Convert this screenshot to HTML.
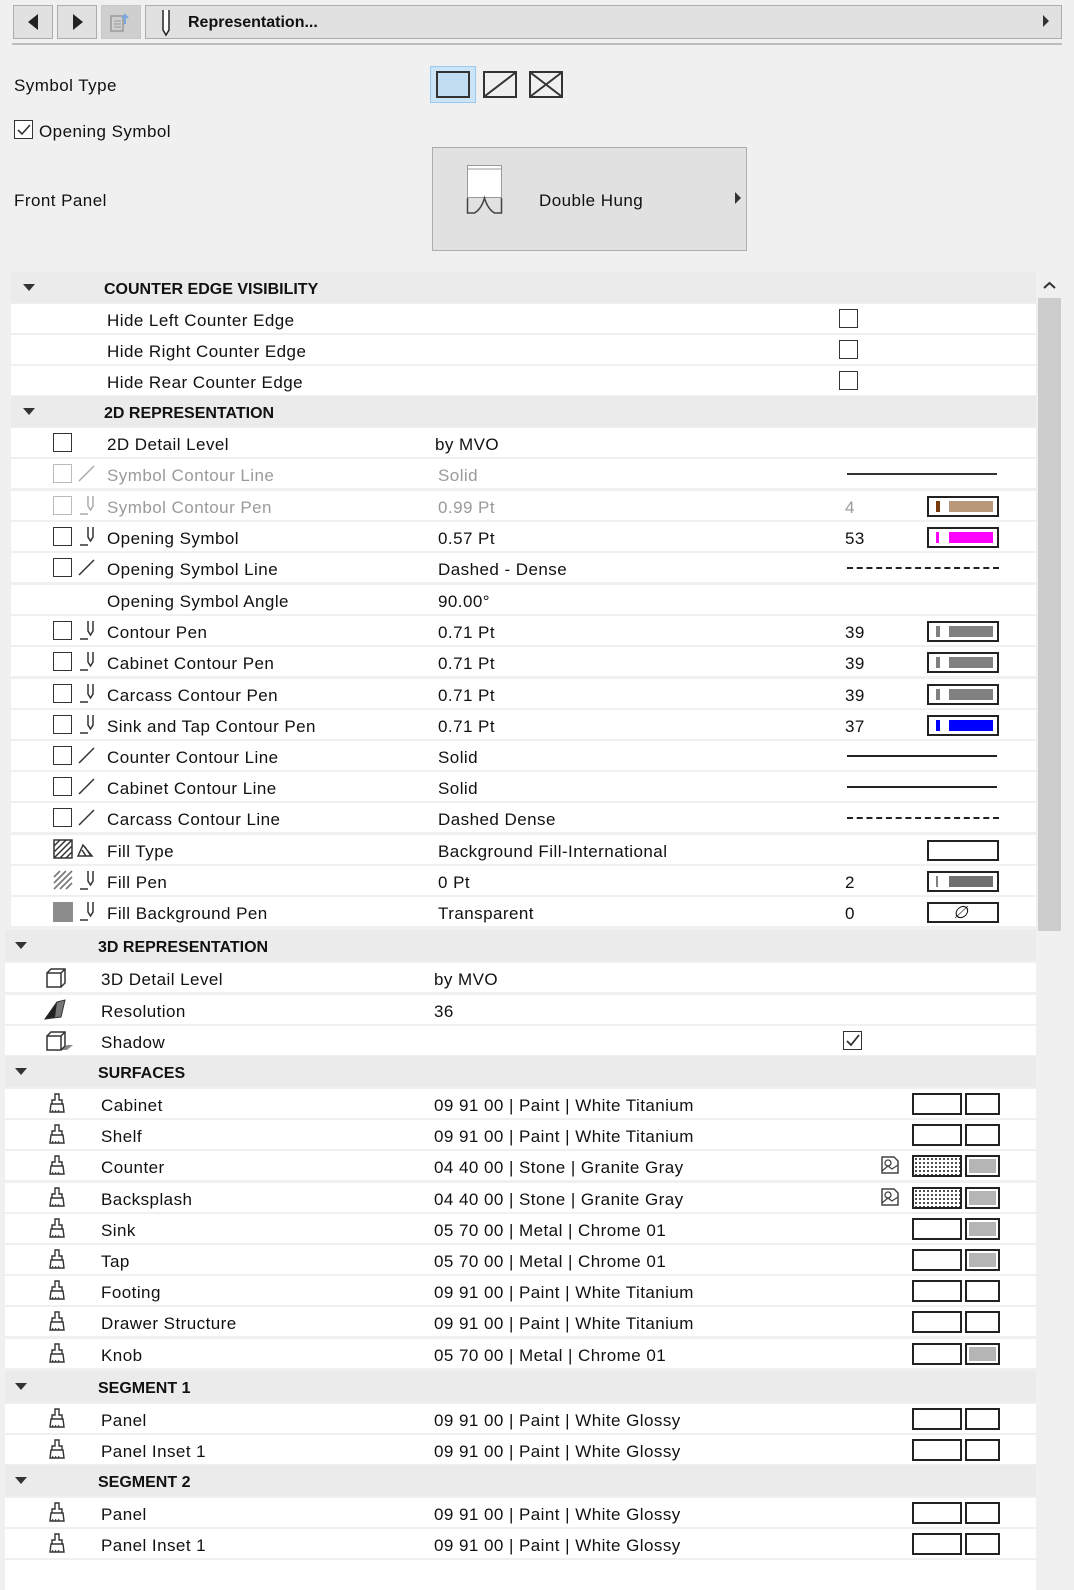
<!DOCTYPE html>
<html><head><meta charset="utf-8">
<style>
*{margin:0;padding:0;box-sizing:border-box}
body{width:1074px;height:1579px;background:#f0f0f0;font-family:"Liberation Sans",sans-serif;font-size:17px;letter-spacing:0.45px;color:#111;position:relative;overflow:hidden}
.a{position:absolute}
.r{position:absolute;left:11px;width:1025px;height:29px;background:#fff}
.r3{left:5px;width:1031px}
.h{position:absolute;left:11px;width:1025px;height:31px;background:#ebebeb;font-weight:bold;font-size:16px;letter-spacing:0}
.h3{left:5px;width:1031px}
.t{position:absolute;top:2px;line-height:29px;white-space:nowrap}
.h .t{line-height:31px}
.g{color:#9a9a9a}
.cb{position:absolute;top:5px;width:19px;height:19px;border:1.5px solid #333;background:#fff}
.g .cb{border-color:#bbb}
.ic{position:absolute;top:4px}
.tri{position:absolute;left:12px;top:12px;width:0;height:0;border-left:6px solid transparent;border-right:6px solid transparent;border-top:7px solid #333}
.sw{position:absolute;left:916px;top:5px;width:72px;height:21px;border:2px solid #222;background:#fff}
.sw .b{position:absolute;left:7px;top:3px;width:4px;height:11px}
.sw .f{position:absolute;left:20px;top:3px;width:44px;height:11px}
.ln{position:absolute;left:836px;top:14px;width:150px;border-top:2px solid #222}
.dl{position:absolute;left:836px;top:14px;width:152px;border-top:2px dashed #222}
.s1{position:absolute;left:907px;top:4px;width:50px;height:22px;border:2px solid #222;background:#fff}
.s2{position:absolute;left:960px;top:4px;width:35px;height:22px;border:2px solid #222;background:#fff}
.s2.gr{background:#b5b5b5;box-shadow:inset 0 0 0 2px #fff}
.dot{background-color:#fff;background-image:radial-gradient(#222 0.9px,transparent 1.1px);background-size:4px 4px}
.v{left:427px}
.v3{left:429px}
.n{left:834px}
.L{left:96px}
#list{position:absolute;left:0;top:2px;width:1074px;height:1577px}
</style></head><body>
<div class="a" style="left:12px;top:5px;width:1050px;height:34px;background:#f0f0f0"></div>
<div class="a" style="left:13px;top:5px;width:40px;height:34px;background:#e1e1e1;border:1px solid #adadad"></div>
<div class="a" style="left:28px;top:14px;border-top:8px solid transparent;border-bottom:8px solid transparent;border-right:10px solid #222"></div>
<div class="a" style="left:57px;top:5px;width:40px;height:34px;background:#e1e1e1;border:1px solid #adadad"></div>
<div class="a" style="left:73px;top:14px;border-top:8px solid transparent;border-bottom:8px solid transparent;border-left:10px solid #222"></div>
<div class="a" style="left:101px;top:5px;width:40px;height:34px;background:#cfcfcf;border:1px solid #c8c8c8"></div>
<svg class="a" style="left:108px;top:10px" width="28" height="26"><rect x="3" y="6" width="12" height="15" fill="none" stroke="#9a9a9a" stroke-width="1.5"/><path d="M6 11h7M6 14h7M6 17h7" stroke="#9a9a9a"/><path d="M17 14V5M14 8l3-3 3 3" stroke="#7aa7e0" stroke-width="2" fill="none"/></svg>
<div class="a" style="left:145px;top:5px;width:917px;height:34px;background:#e1e1e1;border:1px solid #adadad"></div>
<svg class="a" style="left:157px;top:8px" width="20" height="30"><path d="M6 2v20l3 5 3-5V2" fill="#fff" stroke="#222" stroke-width="1.5"/></svg>
<div class="a" style="left:188px;top:14px;font-weight:bold;font-size:16px;letter-spacing:0">Representation...</div>
<div class="a" style="left:1043px;top:15px;border-top:6px solid transparent;border-bottom:6px solid transparent;border-left:6px solid #333"></div>
<div class="a" style="left:12px;top:43px;width:1050px;height:2px;background:#bdbdbd"></div>

<div class="a" style="left:14px;top:76px">Symbol Type</div>
<div class="a" style="left:430px;top:66px;width:46px;height:37px;background:#cce4f7;border:1px solid #99c9ef"></div>
<div class="a" style="left:436px;top:71px;width:34px;height:27px;background:#c2dcf2;border:2px solid #333"></div>
<div class="a" style="left:483px;top:71px;width:34px;height:27px;border:2px solid #333"></div>
<svg class="a" style="left:483px;top:71px" width="34" height="27"><path d="M2 25L32 2" stroke="#333" stroke-width="2"/></svg>
<div class="a" style="left:529px;top:71px;width:34px;height:27px;border:2px solid #333"></div>
<svg class="a" style="left:529px;top:71px" width="34" height="27"><path d="M2 2L32 25M2 25L32 2" stroke="#333" stroke-width="2"/></svg>
<div class="a" style="left:14px;top:120px;width:19px;height:19px;border:1.5px solid #333;background:#fff"></div>
<svg class="a" style="left:14px;top:120px" width="19" height="19"><path d="M4 10l4 4 8-9" stroke="#333" stroke-width="1.6" fill="none"/></svg>
<div class="a" style="left:39px;top:122px">Opening Symbol</div>
<div class="a" style="left:14px;top:191px">Front Panel</div>
<div class="a" style="left:432px;top:147px;width:315px;height:104px;background:#e1e1e1;border:1px solid #adadad"></div>
<svg class="a" style="left:466px;top:164px" width="40" height="52"><rect x="1.5" y="1.5" width="34" height="32" fill="#fff" stroke="#999"/><path d="M1.5 5h34" stroke="#999"/><path d="M1.5 34v15h7c5-3 8-8 10-15 2 7 5 12 10 15h7V34" fill="none" stroke="#444" stroke-width="1.5"/></svg>
<div class="a" style="left:539px;top:191px">Double Hung</div>
<div class="a" style="left:735px;top:192px;border-top:6px solid transparent;border-bottom:6px solid transparent;border-left:6px solid #333"></div>

<div class="a" style="left:1038px;top:270px;width:23px;height:1309px;background:#f0f0f0"></div>
<svg class="a" style="left:1038px;top:277px" width="23" height="16"><path d="M6 11l5.5-5 5.5 5" stroke="#333" stroke-width="2" fill="none"/></svg>
<div class="a" style="left:1038px;top:298px;width:23px;height:633px;background:#cdcdcd"></div>

<div id="list">
<div class="h" style="top:270px"><div class="tri"></div><div class="t" style="left:93px">COUNTER EDGE VISIBILITY</div></div>
<div class="r" style="top:302px"><div class="t L">Hide Left Counter Edge</div><div class="cb" style="left:828px"></div></div>
<div class="r" style="top:333px"><div class="t L">Hide Right Counter Edge</div><div class="cb" style="left:828px"></div></div>
<div class="r" style="top:364px"><div class="t L">Hide Rear Counter Edge</div><div class="cb" style="left:828px"></div></div>

<div class="h" style="top:394px"><div class="tri"></div><div class="t" style="left:93px">2D REPRESENTATION</div></div>
<div class="r" style="top:426px"><div class="cb" style="left:42px"></div><div class="t L">2D Detail Level</div><div class="t" style="left:424px">by MVO</div></div>
<div class="r g" style="top:457px"><div class="cb" style="left:42px"></div><svg class="ic" style="left:66px" width="20" height="20"><path d="M2 18L17 3" stroke="#aaa" stroke-width="1.5"/></svg><div class="t L">Symbol Contour Line</div><div class="t v">Solid</div><div class="ln" style="border-color:#333"></div></div>
<div class="r g" style="top:489px"><div class="cb" style="left:42px"></div><svg class="ic" style="left:66px" width="20" height="22"><path d="M11 1v10l2.5 4 2.5-4V1M3 19h8" fill="none" stroke="#aaa" stroke-width="1.5"/></svg><div class="t L">Symbol Contour Pen</div><div class="t v">0.99 Pt</div><div class="t n">4</div><div class="sw"><div class="b" style="background:#7a3b0c"></div><div class="f" style="background:#b8977a"></div></div></div>
<div class="r" style="top:520px"><div class="cb" style="left:42px"></div><svg class="ic" style="left:66px" width="20" height="22"><path d="M11 1v10l2.5 4 2.5-4V1M3 19h8" fill="none" stroke="#333" stroke-width="1.5"/></svg><div class="t L">Opening Symbol</div><div class="t v">0.57 Pt</div><div class="t n">53</div><div class="sw"><div class="b" style="background:#f0f;width:3px"></div><div class="f" style="background:#f0f"></div></div></div>
<div class="r" style="top:551px"><div class="cb" style="left:42px"></div><svg class="ic" style="left:66px" width="20" height="20"><path d="M2 18L17 3" stroke="#333" stroke-width="1.5"/></svg><div class="t L">Opening Symbol Line</div><div class="t v">Dashed - Dense</div><div class="dl"></div></div>
<div class="r" style="top:583px"><div class="t L">Opening Symbol Angle</div><div class="t v">90.00°</div></div>
<div class="r" style="top:614px"><div class="cb" style="left:42px"></div><svg class="ic" style="left:66px" width="20" height="22"><path d="M11 1v10l2.5 4 2.5-4V1M3 19h8" fill="none" stroke="#333" stroke-width="1.5"/></svg><div class="t L">Contour Pen</div><div class="t v">0.71 Pt</div><div class="t n">39</div><div class="sw"><div class="b" style="background:#808080"></div><div class="f" style="background:#808080"></div></div></div>
<div class="r" style="top:645px"><div class="cb" style="left:42px"></div><svg class="ic" style="left:66px" width="20" height="22"><path d="M11 1v10l2.5 4 2.5-4V1M3 19h8" fill="none" stroke="#333" stroke-width="1.5"/></svg><div class="t L">Cabinet Contour Pen</div><div class="t v">0.71 Pt</div><div class="t n">39</div><div class="sw"><div class="b" style="background:#808080"></div><div class="f" style="background:#808080"></div></div></div>
<div class="r" style="top:677px"><div class="cb" style="left:42px"></div><svg class="ic" style="left:66px" width="20" height="22"><path d="M11 1v10l2.5 4 2.5-4V1M3 19h8" fill="none" stroke="#333" stroke-width="1.5"/></svg><div class="t L">Carcass Contour Pen</div><div class="t v">0.71 Pt</div><div class="t n">39</div><div class="sw"><div class="b" style="background:#808080"></div><div class="f" style="background:#808080"></div></div></div>
<div class="r" style="top:708px"><div class="cb" style="left:42px"></div><svg class="ic" style="left:66px" width="20" height="22"><path d="M11 1v10l2.5 4 2.5-4V1M3 19h8" fill="none" stroke="#333" stroke-width="1.5"/></svg><div class="t L">Sink and Tap Contour Pen</div><div class="t v">0.71 Pt</div><div class="t n">37</div><div class="sw"><div class="b" style="background:#00f"></div><div class="f" style="background:#00f"></div></div></div>
<div class="r" style="top:739px"><div class="cb" style="left:42px"></div><svg class="ic" style="left:66px" width="20" height="20"><path d="M2 18L17 3" stroke="#333" stroke-width="1.5"/></svg><div class="t L">Counter Contour Line</div><div class="t v">Solid</div><div class="ln"></div></div>
<div class="r" style="top:770px"><div class="cb" style="left:42px"></div><svg class="ic" style="left:66px" width="20" height="20"><path d="M2 18L17 3" stroke="#333" stroke-width="1.5"/></svg><div class="t L">Cabinet Contour Line</div><div class="t v">Solid</div><div class="ln"></div></div>
<div class="r" style="top:801px"><div class="cb" style="left:42px"></div><svg class="ic" style="left:66px" width="20" height="20"><path d="M2 18L17 3" stroke="#333" stroke-width="1.5"/></svg><div class="t L">Carcass Contour Line</div><div class="t v">Dashed Dense</div><div class="dl"></div></div>
<div class="r" style="top:833px"><svg class="ic" style="left:42px" width="42" height="22"><rect x="1" y="1" width="18" height="18" fill="#fff" stroke="#333" stroke-width="1.5"/><path d="M1 7L7 1M1 13L13 1M1 19L19 1M7 19L19 7M13 19L19 13" stroke="#333" stroke-width="1.5"/><path d="M25 17l5-11 9 11zM29 11l4 6M32 8l6 9" fill="none" stroke="#333" stroke-width="1.5"/></svg><div class="t L">Fill Type</div><div class="t v">Background Fill-International</div><div class="sw"></div></div>
<div class="r" style="top:864px"><svg class="ic" style="left:42px" width="20" height="22"><path d="M1 7L7 1M1 13L13 1M1 19L19 1M7 19L19 7M13 19L19 13" stroke="#777" stroke-width="1.6"/></svg><svg class="ic" style="left:66px" width="20" height="22"><path d="M11 1v10l2.5 4 2.5-4V1M3 19h8" fill="none" stroke="#333" stroke-width="1.5"/></svg><div class="t L">Fill Pen</div><div class="t v">0 Pt</div><div class="t n">2</div><div class="sw"><div class="b" style="background:#808080;width:2px"></div><div class="f" style="background:#707070"></div></div></div>
<div class="r" style="top:895px"><div class="a" style="left:42px;top:5px;width:20px;height:20px;background:#8c8c8c"></div><svg class="ic" style="left:66px" width="20" height="22"><path d="M11 1v10l2.5 4 2.5-4V1M3 19h8" fill="none" stroke="#333" stroke-width="1.5"/></svg><div class="t L">Fill Background Pen</div><div class="t v">Transparent</div><div class="t n">0</div><div class="sw"><div class="t" style="left:24px;top:-6px;font-style:italic">∅</div></div></div>

<div class="h h3" style="top:928px"><div class="tri" style="left:10px"></div><div class="t" style="left:93px">3D REPRESENTATION</div></div>
<div class="r r3" style="top:961px"><svg class="ic" style="left:40px" width="24" height="22"><path d="M2 6h14v14H2zM2 6l4-4h14v14l-4 4M16 6l4-4" fill="none" stroke="#333" stroke-width="1.5"/></svg><div class="t L">3D Detail Level</div><div class="t v3">by MVO</div></div>
<div class="r r3" style="top:993px"><svg class="ic" style="left:38px" width="26" height="22"><path d="M2 20L14 3 22 1 18 18z" fill="#777" stroke="#333"/><path d="M2 20L14 3 12 18z" fill="#222"/></svg><div class="t L">Resolution</div><div class="t v3">36</div></div>
<div class="r r3" style="top:1024px"><svg class="ic" style="left:40px" width="30" height="22"><path d="M16 20l6-5h6l-6 5z" fill="#888"/><path d="M2 6h14v14H2zM2 6l4-4h14v14l-4 4M16 6l4-4" fill="#fff" stroke="#333" stroke-width="1.5"/></svg><div class="t L">Shadow</div><div class="cb" style="left:838px"></div><svg class="a" style="left:838px;top:5px" width="19" height="19"><path d="M4 10l4 4 8-10" stroke="#333" stroke-width="1.8" fill="none"/></svg></div>

<div class="h h3" style="top:1054px"><div class="tri" style="left:10px"></div><div class="t" style="left:93px">SURFACES</div></div>
<div class="r r3" style="top:1087px"><svg class="ic" style="left:42px" width="20" height="22"><path d="M8 1h4v6h3v4h-10v-4h3zM4 11h12l1 8H3z" fill="none" stroke="#333" stroke-width="1.4"/><path d="M5 19l1-2M8 19l1-2M11 19l1-2" stroke="#333"/></svg><div class="t L">Cabinet</div><div class="t v3">09 91 00 | Paint | White Titanium</div><div class="s1"></div><div class="s2"></div></div>
<div class="r r3" style="top:1118px"><svg class="ic" style="left:42px" width="20" height="22"><path d="M8 1h4v6h3v4h-10v-4h3zM4 11h12l1 8H3z" fill="none" stroke="#333" stroke-width="1.4"/><path d="M5 19l1-2M8 19l1-2M11 19l1-2" stroke="#333"/></svg><div class="t L">Shelf</div><div class="t v3">09 91 00 | Paint | White Titanium</div><div class="s1"></div><div class="s2"></div></div>
<div class="r r3" style="top:1149px"><svg class="ic" style="left:42px" width="20" height="22"><path d="M8 1h4v6h3v4h-10v-4h3zM4 11h12l1 8H3z" fill="none" stroke="#333" stroke-width="1.4"/><path d="M5 19l1-2M8 19l1-2M11 19l1-2" stroke="#333"/></svg><div class="t L">Counter</div><div class="t v3">04 40 00 | Stone | Granite Gray</div><svg class="ic" style="left:875px" width="20" height="20"><path d="M2 2h12l4 4v12H2z" fill="none" stroke="#444" stroke-width="1.5"/><circle cx="8" cy="8" r="3" fill="none" stroke="#444" stroke-width="1.3"/><path d="M2 16l6-5 4 3 6-4" fill="none" stroke="#444" stroke-width="1.3"/></svg><div class="s1 dot"></div><div class="s2 gr"></div></div>
<div class="r r3" style="top:1181px"><svg class="ic" style="left:42px" width="20" height="22"><path d="M8 1h4v6h3v4h-10v-4h3zM4 11h12l1 8H3z" fill="none" stroke="#333" stroke-width="1.4"/><path d="M5 19l1-2M8 19l1-2M11 19l1-2" stroke="#333"/></svg><div class="t L">Backsplash</div><div class="t v3">04 40 00 | Stone | Granite Gray</div><svg class="ic" style="left:875px" width="20" height="20"><path d="M2 2h12l4 4v12H2z" fill="none" stroke="#444" stroke-width="1.5"/><circle cx="8" cy="8" r="3" fill="none" stroke="#444" stroke-width="1.3"/><path d="M2 16l6-5 4 3 6-4" fill="none" stroke="#444" stroke-width="1.3"/></svg><div class="s1 dot"></div><div class="s2 gr"></div></div>
<div class="r r3" style="top:1212px"><svg class="ic" style="left:42px" width="20" height="22"><path d="M8 1h4v6h3v4h-10v-4h3zM4 11h12l1 8H3z" fill="none" stroke="#333" stroke-width="1.4"/><path d="M5 19l1-2M8 19l1-2M11 19l1-2" stroke="#333"/></svg><div class="t L">Sink</div><div class="t v3">05 70 00 | Metal | Chrome 01</div><div class="s1"></div><div class="s2 gr"></div></div>
<div class="r r3" style="top:1243px"><svg class="ic" style="left:42px" width="20" height="22"><path d="M8 1h4v6h3v4h-10v-4h3zM4 11h12l1 8H3z" fill="none" stroke="#333" stroke-width="1.4"/><path d="M5 19l1-2M8 19l1-2M11 19l1-2" stroke="#333"/></svg><div class="t L">Tap</div><div class="t v3">05 70 00 | Metal | Chrome 01</div><div class="s1"></div><div class="s2 gr"></div></div>
<div class="r r3" style="top:1274px"><svg class="ic" style="left:42px" width="20" height="22"><path d="M8 1h4v6h3v4h-10v-4h3zM4 11h12l1 8H3z" fill="none" stroke="#333" stroke-width="1.4"/><path d="M5 19l1-2M8 19l1-2M11 19l1-2" stroke="#333"/></svg><div class="t L">Footing</div><div class="t v3">09 91 00 | Paint | White Titanium</div><div class="s1"></div><div class="s2"></div></div>
<div class="r r3" style="top:1305px"><svg class="ic" style="left:42px" width="20" height="22"><path d="M8 1h4v6h3v4h-10v-4h3zM4 11h12l1 8H3z" fill="none" stroke="#333" stroke-width="1.4"/><path d="M5 19l1-2M8 19l1-2M11 19l1-2" stroke="#333"/></svg><div class="t L">Drawer Structure</div><div class="t v3">09 91 00 | Paint | White Titanium</div><div class="s1"></div><div class="s2"></div></div>
<div class="r r3" style="top:1337px"><svg class="ic" style="left:42px" width="20" height="22"><path d="M8 1h4v6h3v4h-10v-4h3zM4 11h12l1 8H3z" fill="none" stroke="#333" stroke-width="1.4"/><path d="M5 19l1-2M8 19l1-2M11 19l1-2" stroke="#333"/></svg><div class="t L">Knob</div><div class="t v3">05 70 00 | Metal | Chrome 01</div><div class="s1"></div><div class="s2 gr"></div></div>

<div class="h h3" style="top:1369px"><div class="tri" style="left:10px"></div><div class="t" style="left:93px">SEGMENT 1</div></div>
<div class="r r3" style="top:1402px"><svg class="ic" style="left:42px" width="20" height="22"><path d="M8 1h4v6h3v4h-10v-4h3zM4 11h12l1 8H3z" fill="none" stroke="#333" stroke-width="1.4"/><path d="M5 19l1-2M8 19l1-2M11 19l1-2" stroke="#333"/></svg><div class="t L">Panel</div><div class="t v3">09 91 00 | Paint | White Glossy</div><div class="s1"></div><div class="s2"></div></div>
<div class="r r3" style="top:1433px"><svg class="ic" style="left:42px" width="20" height="22"><path d="M8 1h4v6h3v4h-10v-4h3zM4 11h12l1 8H3z" fill="none" stroke="#333" stroke-width="1.4"/><path d="M5 19l1-2M8 19l1-2M11 19l1-2" stroke="#333"/></svg><div class="t L">Panel Inset 1</div><div class="t v3">09 91 00 | Paint | White Glossy</div><div class="s1"></div><div class="s2"></div></div>

<div class="h h3" style="top:1463px"><div class="tri" style="left:10px"></div><div class="t" style="left:93px">SEGMENT 2</div></div>
<div class="r r3" style="top:1496px"><svg class="ic" style="left:42px" width="20" height="22"><path d="M8 1h4v6h3v4h-10v-4h3zM4 11h12l1 8H3z" fill="none" stroke="#333" stroke-width="1.4"/><path d="M5 19l1-2M8 19l1-2M11 19l1-2" stroke="#333"/></svg><div class="t L">Panel</div><div class="t v3">09 91 00 | Paint | White Glossy</div><div class="s1"></div><div class="s2"></div></div>
<div class="r r3" style="top:1527px"><svg class="ic" style="left:42px" width="20" height="22"><path d="M8 1h4v6h3v4h-10v-4h3zM4 11h12l1 8H3z" fill="none" stroke="#333" stroke-width="1.4"/><path d="M5 19l1-2M8 19l1-2M11 19l1-2" stroke="#333"/></svg><div class="t L">Panel Inset 1</div><div class="t v3">09 91 00 | Paint | White Glossy</div><div class="s1"></div><div class="s2"></div></div>
<div class="r r3" style="top:1558px;height:30px"></div>
</div>
</body></html>
